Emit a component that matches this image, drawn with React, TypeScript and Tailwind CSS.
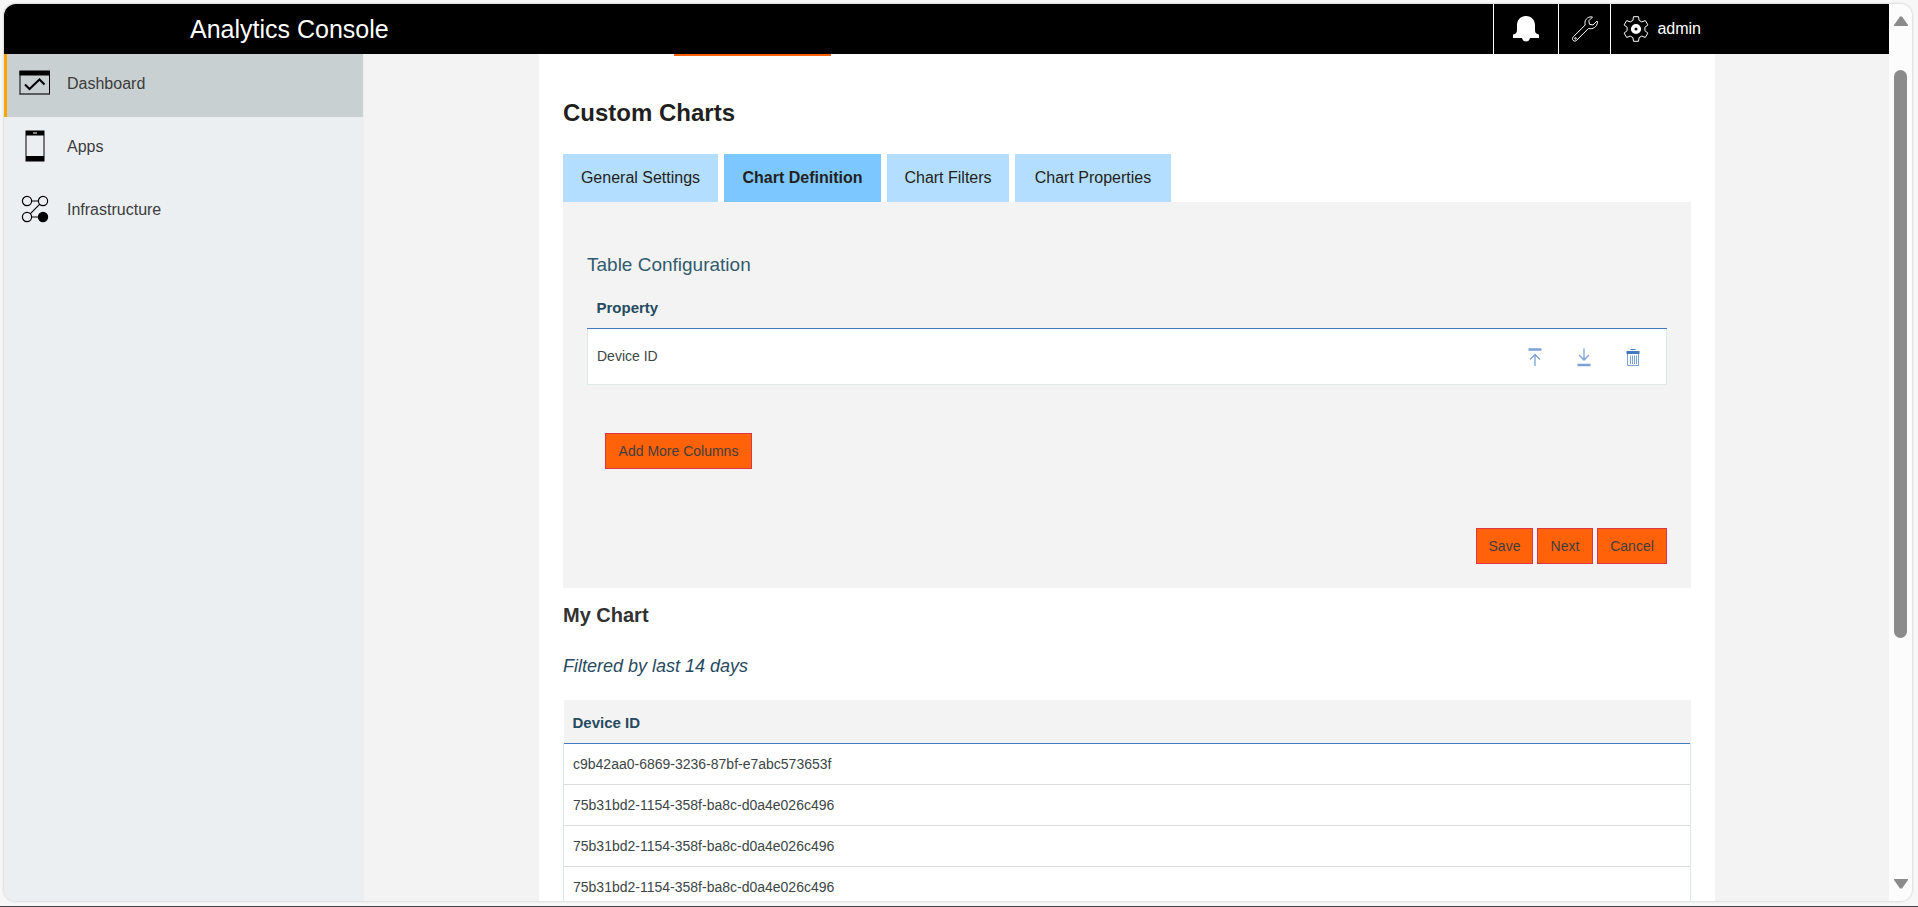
import type { ReactNode } from "react";

const navItems = [
  { label: "Dashboard", icon: <DashboardIcon />, active: true },
  { label: "Apps", icon: <PhoneIcon />, active: false },
  { label: "Infrastructure", icon: <NodesIcon />, active: false },
];

const tabs = [
  { label: "General Settings", width: "w-[155px]", active: false },
  { label: "Chart Definition", width: "w-[157px]", active: true },
  { label: "Chart Filters", width: "w-[122px]", active: false },
  { label: "Chart Properties", width: "w-[156px]", active: false },
];

const deviceIds = [
  "c9b42aa0-6869-3236-87bf-e7abc573653f",
  "75b31bd2-1154-358f-ba8c-d0a4e026c496",
  "75b31bd2-1154-358f-ba8c-d0a4e026c496",
  "75b31bd2-1154-358f-ba8c-d0a4e026c496",
];

function DashboardIcon() {
  return (
    <svg width="32" height="26" viewBox="0 0 32 26" fill="none" stroke="#000">
      <path d="M1 1v23.500M30.500 1v23.500" />
      <path d="M.5 24h30.500" stroke="#333" strokeWidth="1.500" />
      <path d="M.5 .5H31v5H.5z" fill="#000" stroke="none" />
      <path d="M6 14.500l4.500 4.500L20.500 9.500l5 5" strokeWidth="2" />
    </svg>
  );
}

function PhoneIcon() {
  return (
    <svg width="20" height="32" viewBox="0 0 20 32">
      <path d="M.5.5h19v31H.5z" fill="#000" />
      <path d="M1.500 5.500h17v20.500h-17z" fill="#ebeff2" />
      <path d="M8 2.500h4v1H8z" fill="#fff" />
    </svg>
  );
}

function NodesIcon() {
  return (
    <svg width="28" height="28" viewBox="0 0 28 28" fill="none" stroke="#000" strokeWidth="1.200">
      <circle cx="6" cy="6" r="4.600" />
      <circle cx="22" cy="6" r="4.600" />
      <circle cx="6" cy="22" r="4.600" />
      <circle cx="22" cy="22" r="4.600" fill="#000" />
      <path d="M10.500 6h7M18.800 9.200L9.200 18.800M10.500 22h7" />
    </svg>
  );
}

function BellIcon() {
  return (
    <svg width="26" height="26" viewBox="0 0 26 26" fill="#fff">
      <path d="M13 0c5.500 0 9 4 9 9v5c0 2.500 1 4 4 4.500V22h-9c-.5 2.400-2 3.500-4 3.500S9.500 24.400 9 22H0v-3.500c3-.5 4-2 4-4.500V9c0-5 3.500-9 9-9z" />
    </svg>
  );
}

function WrenchIcon() {
  return (
    <svg width="26" height="26" viewBox="0 0 26 26" fill="none" stroke="#fff" strokeLinejoin="round">
      <path d="M20.500 1C17 .2 13.600 2.500 13 6c-.1 1.200 0 2 .2 3L1.300 20.800c-1.100 1.100-1.100 2.700-.2 3.600 1 1 2.600.9 3.600-.1L16.500 12.400c4.400 1.300 8.700-1.600 9-6.400l-.5-1-4 4-3.500-.7-.7-3.500z" />
      <circle cx="3.500" cy="22.400" r=".8" />
    </svg>
  );
}

function GearIcon() {
  return (
    <svg width="26" height="26" viewBox="0 0 26 26" fill="none" stroke="#fff">
      <path
        d="M10.500.7h5l.6 3.700 2.600 1.500 3.600-1.300 2.600 4.300-3 2.400v3.400l3 2.400-2.600 4.300-3.600-1.300-2.600 1.500-.6 3.700h-5l-.6-3.700-2.600-1.500-3.600 1.300-2.600-4.300 3-2.400v-3.400l-3-2.400 2.600-4.300 3.600 1.300 2.600-1.500z"
        strokeLinejoin="round"
      />
      <circle cx="13" cy="13" r="3.300" strokeWidth="3.600" />
    </svg>
  );
}

function MoveTopIcon() {
  return (
    <svg width="14" height="20" viewBox="0 0 14 20" fill="none" stroke="#7ba1d8">
      <path d="M.5 2.500h13" strokeWidth="2.500" />
      <path d="M7 19V7.500M2 12.500l5-5 5 5" strokeWidth="1.300" />
    </svg>
  );
}

function MoveBottomIcon() {
  return (
    <svg width="14" height="20" viewBox="0 0 14 20" fill="none" stroke="#7ba1d8">
      <path d="M.5 18h13" strokeWidth="2.500" />
      <path d="M7 1.500V13M2 8l5 5 5-5" strokeWidth="1.300" />
    </svg>
  );
}

function TrashIcon() {
  return (
    <svg width="14" height="20" viewBox="0 0 14 20" fill="none" stroke="#7ba1d8">
      <path d="M1.500 6v12.500h11V6" />
      <path d="M4.500 8.500V17M6.500 8.500V17M8.500 8.500V17M10.500 8.500V17" />
      <path d="M.5 4h13v3H.5zM4.500 2h5v1h-5z" fill="#4178be" stroke="none" />
    </svg>
  );
}

function Button({ children, className = "" }: { children: ReactNode; className?: string }) {
  return (
    <button
      type="button"
      className={`flex items-center justify-center h-9 border border-[#dc3545] bg-[#ff6208] text-sm text-[#3f3f3f] ${className}`}
    >
      {children}
    </button>
  );
}

export default function App() {
  return (
    <div className="h-screen flex flex-col bg-[#f7f7f7] font-['Liberation_Sans',Arial,sans-serif]">
      <div className="flex-1 min-h-0 pt-1 pl-1 pr-1.5 pb-[5px] border-b border-[#3f3d4a]">
        <div className="h-full flex rounded-xl overflow-hidden shadow-[0_0_2px_1px_#dcdcdc]">
          <div className="flex-1 min-w-0 flex flex-col">
            <header className="h-[50px] shrink-0 flex items-stretch justify-between bg-black text-white pl-[186px] pr-[187px]">
              <div className="flex items-center pt-0.5 text-[25px]">Analytics Console</div>
              <div className="flex">
                <button type="button" aria-label="Notifications" className="w-[65px] flex items-center justify-center border-l border-white">
                  <BellIcon />
                </button>
                <button type="button" aria-label="Tools" className="w-[52px] flex items-center justify-center border-l border-white">
                  <WrenchIcon />
                </button>
                <button type="button" className="flex items-center gap-2 pl-3 pr-px border-l border-white text-base">
                  <GearIcon />
                  admin
                </button>
              </div>
            </header>

            <div className="flex-1 min-h-0 flex">
              <nav className="w-[360px] shrink-0 bg-[#ebeff2]">
                {navItems.map((item) => (
                  <a
                    key={item.label}
                    href="#"
                    className={`h-[63px] mr-px pb-1 flex items-center border-l-3 text-base text-[#3c3c3c] ${
                      item.active ? "border-[#ffa500] bg-[#c8d0d1]" : "border-transparent"
                    }`}
                  >
                    <span className="w-14 pb-0.5 flex justify-center">{item.icon}</span>
                    <span className="ml-1">{item.label}</span>
                  </a>
                ))}
              </nav>

              <main className="flex-1 min-w-0 overflow-hidden bg-[#f3f3f3] pl-[175px] pr-[174px]">
                <div className="min-h-full bg-white px-6">
                  {/* Underline of the selected page tab */}
                  <div className="ml-[111px] w-[157px] h-0.5 bg-[#ff6208]"></div>

                  <h1 className="pt-10 text-2xl leading-[34px] font-bold text-[#231f20]">Custom Charts</h1>

                  <div role="tablist" className="mt-6 flex gap-1.5">
                    {tabs.map((tab) => (
                      <button
                        key={tab.label}
                        type="button"
                        role="tab"
                        aria-selected={tab.active}
                        className={`h-12 text-base text-[#231f20] ${tab.width} ${
                          tab.active ? "bg-[#7cc7ff] font-bold" : "bg-[#b3deff]"
                        }`}
                      >
                        {tab.label}
                      </button>
                    ))}
                  </div>

                  <section className="bg-[#f3f3f3] px-6 pt-12 pb-6">
                    <h2 className="text-[19px] leading-[30px] text-[#325c6e]">Table Configuration</h2>
                    <table className="w-full border-collapse">
                      <thead>
                        <tr className="h-12 border-b border-[#4178be]">
                          <th colSpan={2} className="px-[9px] pt-2 text-left align-middle text-[15px] font-bold text-[#264a60]">
                            Property
                          </th>
                        </tr>
                      </thead>
                      <tbody>
                        <tr className="h-14 bg-white border-x border-b border-[#dfe9e9]">
                          <td className="px-[9px] text-sm text-[#3c4646]">Device ID</td>
                          <td className="pt-0.5 pr-[26px]">
                            <div className="flex justify-end gap-[35px]">
                              <button type="button" aria-label="Move to top">
                                <MoveTopIcon />
                              </button>
                              <button type="button" aria-label="Move to bottom">
                                <MoveBottomIcon />
                              </button>
                              <button type="button" aria-label="Delete">
                                <TrashIcon />
                              </button>
                            </div>
                          </td>
                        </tr>
                      </tbody>
                    </table>
                    <Button className="mt-12 ml-[18px] w-[147px]">Add More Columns</Button>
                    <div className="mt-[59px] flex justify-end gap-1">
                      <Button className="w-[57px]">Save</Button>
                      <Button className="w-14">Next</Button>
                      <Button className="w-[70px]">Cancel</Button>
                    </div>
                  </section>

                  <h2 className="mt-3 text-xl leading-[30px] font-bold text-[#323232]">My Chart</h2>
                  <p className="mt-[22px] text-lg leading-7 italic text-[#264a60]">Filtered by last 14 days</p>

                  <table className="mt-5 w-full border-collapse">
                    <thead>
                      <tr className="h-11 bg-[#f3f3f3] border-b border-[#4178be]">
                        <th className="px-[9px] pt-1 text-left text-[15px] font-bold text-[#264a60]">Device ID</th>
                      </tr>
                    </thead>
                    <tbody>
                      {deviceIds.map((id, i) => (
                        <tr key={i} className="h-[41px] border-b border-[#d9dcdc]">
                          <td className="px-[9px] text-sm text-[#3c4646] border-x border-[#dfe9e9]">{id}</td>
                        </tr>
                      ))}
                    </tbody>
                  </table>
                </div>
              </main>
            </div>
          </div>

          {/* Scrollbar */}
          <div className="w-[23px] shrink-0 bg-[#fcfcfc] flex flex-col items-center py-3">
            <svg width="14" height="10" viewBox="0 0 14 10" fill="#8b8b8b">
              <path d="M6 .5h2L14 9v1H0V9z" />
            </svg>
            <div className="flex-1 w-full flex flex-col items-center pt-11 pb-[241px]">
              <div className="flex-1 w-[13px] rounded-full bg-[#8b8b8b]"></div>
            </div>
            <svg width="14" height="10" viewBox="0 0 14 10" fill="#8b8b8b">
              <path d="M6 9.500h2L14 1V0H0v1z" />
            </svg>
          </div>
        </div>
      </div>
    </div>
  );
}
